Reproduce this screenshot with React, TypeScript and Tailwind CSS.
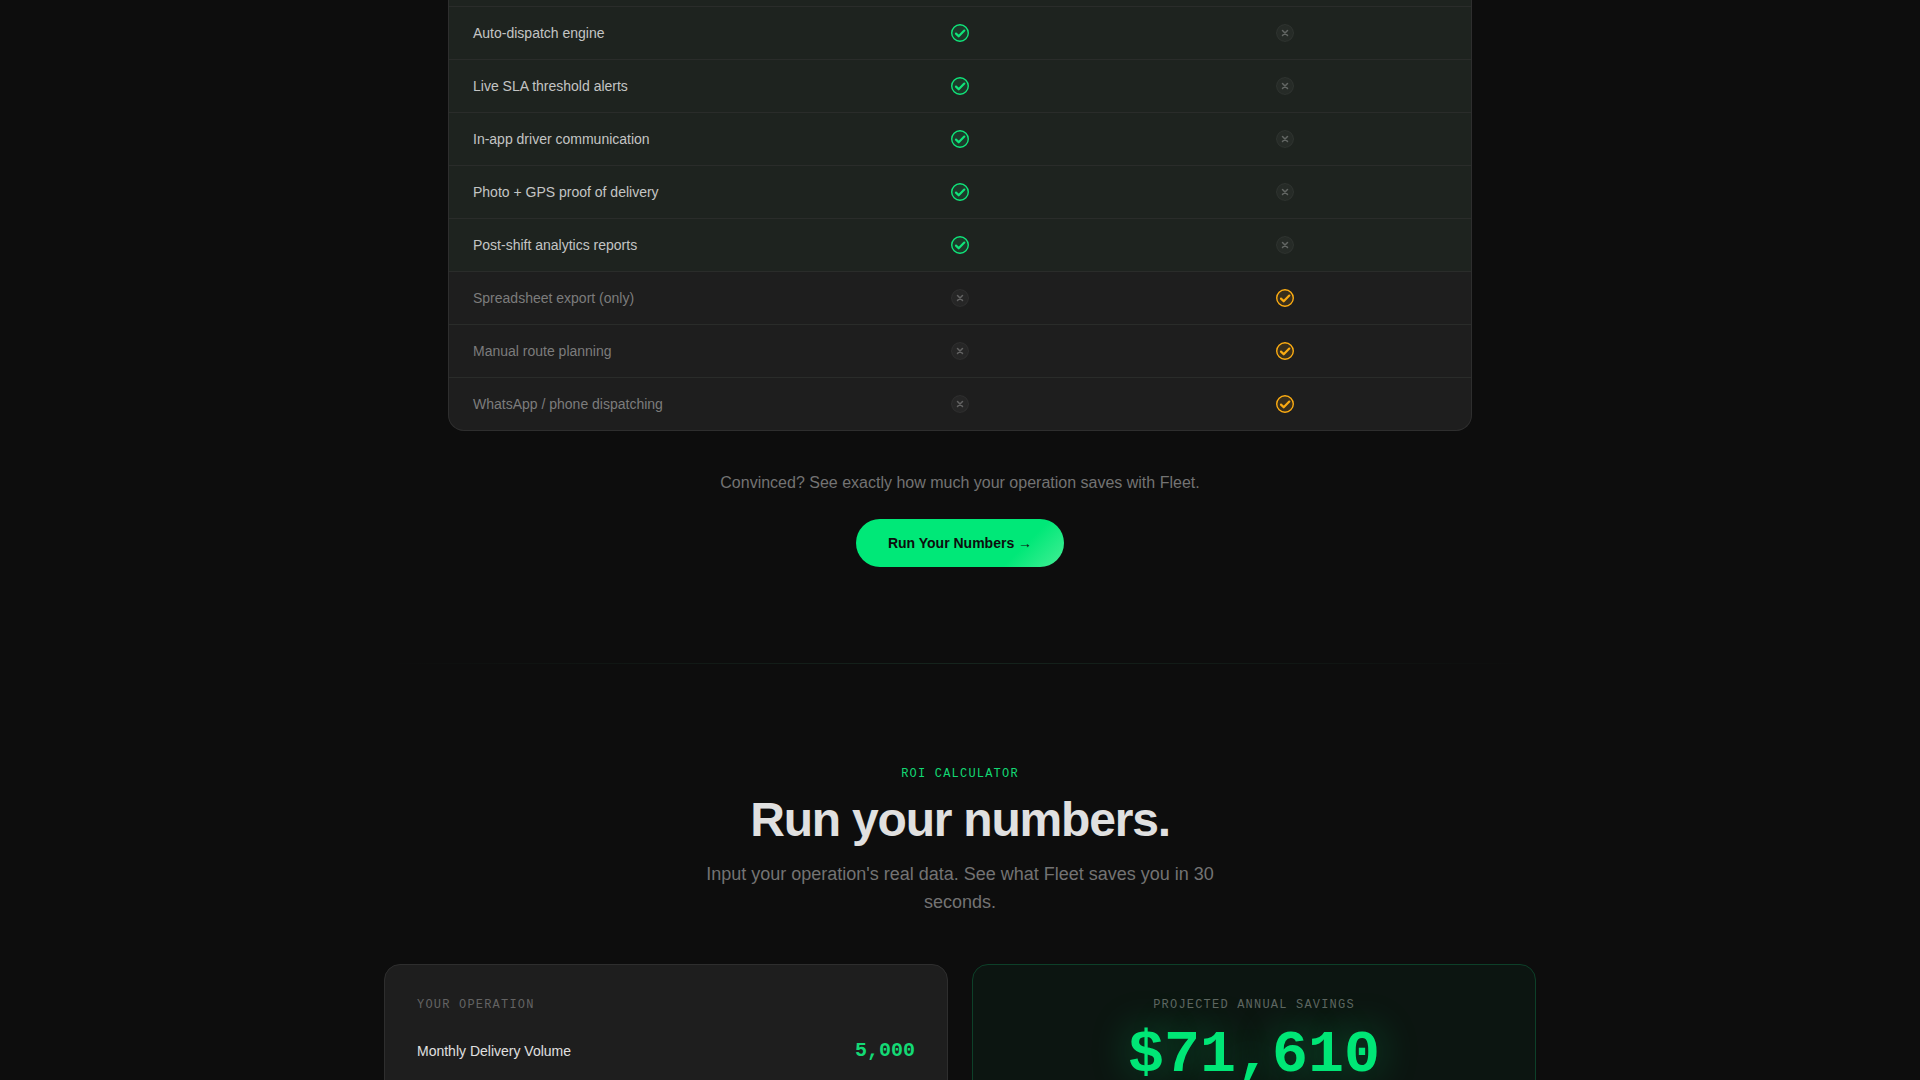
import clsx from "clsx";

const features = [
  { label: "Auto-dispatch engine", fleet: true },
  { label: "Live SLA threshold alerts", fleet: true },
  { label: "In-app driver communication", fleet: true },
  { label: "Photo + GPS proof of delivery", fleet: true },
  { label: "Post-shift analytics reports", fleet: true },
  { label: "Spreadsheet export (only)", fleet: false },
  { label: "Manual route planning", fleet: false },
  { label: "WhatsApp / phone dispatching", fleet: false },
];

function Check({ className }: { className: string }) {
  return (
    <svg viewBox="0 0 18 18" className={clsx("size-[18px]", className)} fill="none" stroke="currentColor">
      <circle cx="9" cy="9" r="8.3" fill="currentColor" fillOpacity="0.12" strokeWidth="1.4" />
      <path d="M5 9.6l2.7 2.7 5.6-5.7" strokeWidth="2.2" strokeLinecap="round" strokeLinejoin="round" />
    </svg>
  );
}

function Cross() {
  return (
    <svg viewBox="0 0 18 18" className="size-[18px] text-white" fill="none" stroke="currentColor">
      <circle cx="9" cy="9" r="8.5" fill="currentColor" fillOpacity="0.04" strokeOpacity="0.06" />
      <path d="M6.5 6.5l5 5M11.5 6.5l-5 5" strokeOpacity="0.28" strokeWidth="1.5" strokeLinecap="round" />
    </svg>
  );
}

function ComparisonTable() {
  return (
    <div className="mx-auto max-w-5xl overflow-hidden rounded-b-2xl border border-t-0 border-[#2e2e2e] bg-[#1e1e1e]">
      <div className="h-1.5 bg-[#1e231f]" />
      <table className="block w-full text-sm">
        <tbody className="block">
          {features.map((f) => (
            <tr
              key={f.label}
              className={clsx(
                "grid grid-cols-3 items-center border-t border-[#2a2c2a] px-6 py-4",
                f.fleet && "bg-[#1e231f]"
              )}
            >
              <th
                scope="row"
                className={clsx("text-left font-normal", f.fleet ? "text-[#c4c5c4]" : "text-[#7c7c7c]")}
              >
                {f.label}
              </th>
              <td className="flex justify-center">
                {f.fleet ? <Check className="text-[#10e47a]" /> : <Cross />}
              </td>
              <td className="flex justify-center">
                {f.fleet ? <Cross /> : <Check className="text-[#fbab12]" />}
              </td>
            </tr>
          ))}
        </tbody>
      </table>
    </div>
  );
}

function Calculator() {
  return (
    <div className="mx-auto mt-12 grid max-w-6xl gap-6 md:grid-cols-2">
      <div className="rounded-2xl border border-[#2e2e2e] bg-[#1e1e1e] p-8">
        <h3 className="font-['Liberation_Mono',monospace] text-xs tracking-widest text-[#636363]">YOUR OPERATION</h3>
        <div className="mt-6 flex items-center justify-between">
          <label htmlFor="volume" className="text-sm text-[#e0e0e0]">
            Monthly Delivery Volume
          </label>
          <output id="volume" className="font-['Liberation_Mono',monospace] text-xl font-bold text-[#14d975]">
            5,000
          </output>
        </div>
      </div>

      <div className="rounded-2xl border border-[#0d4029] bg-[#0c1511] p-8 text-center">
        <h3 className="font-['Liberation_Mono',monospace] text-xs tracking-widest text-[#5f6662]">
          PROJECTED ANNUAL SAVINGS
        </h3>
        <p className="mt-3 font-['Liberation_Mono',monospace] text-6xl font-bold text-[#00e676] [text-shadow:0_0_40px_rgba(0,230,118,0.4)]">
          $71,610
        </p>
      </div>
    </div>
  );
}

export default function App() {
  return (
    <main className="h-screen overflow-hidden bg-[#0d0d0d] font-['Liberation_Sans',Arial,sans-serif] text-[#e0e0e0]">
      <section className="px-6 pb-24">
        <ComparisonTable />
        <div className="mt-10 text-center">
          <p className="text-base text-[#737373]">Convinced? See exactly how much your operation saves with Fleet.</p>
          <button
            type="button"
            className="mt-6 h-12 rounded-full bg-[linear-gradient(135deg,#00e878_76%,#45ee95)] px-8 text-sm font-bold text-[#0d0d0d]"
          >
            Run Your Numbers →
          </button>
        </div>
      </section>

      <div className="mx-auto h-px max-w-6xl bg-linear-to-r from-transparent via-[#15241d] to-transparent" />

      <section className="px-6 pt-[102px]">
        <div className="text-center">
          <p className="font-['Liberation_Mono',monospace] text-xs tracking-widest text-[#12d873]">ROI CALCULATOR</p>
          <h2 className="mt-3.5 text-5xl font-bold tracking-tight">Run your numbers.</h2>
          <p className="mx-auto mt-4 max-w-[520px] text-lg/7 text-[#737373]">
            Input your operation's real data. See what Fleet saves you in 30 seconds.
          </p>
        </div>
        <Calculator />
      </section>
    </main>
  );
}
